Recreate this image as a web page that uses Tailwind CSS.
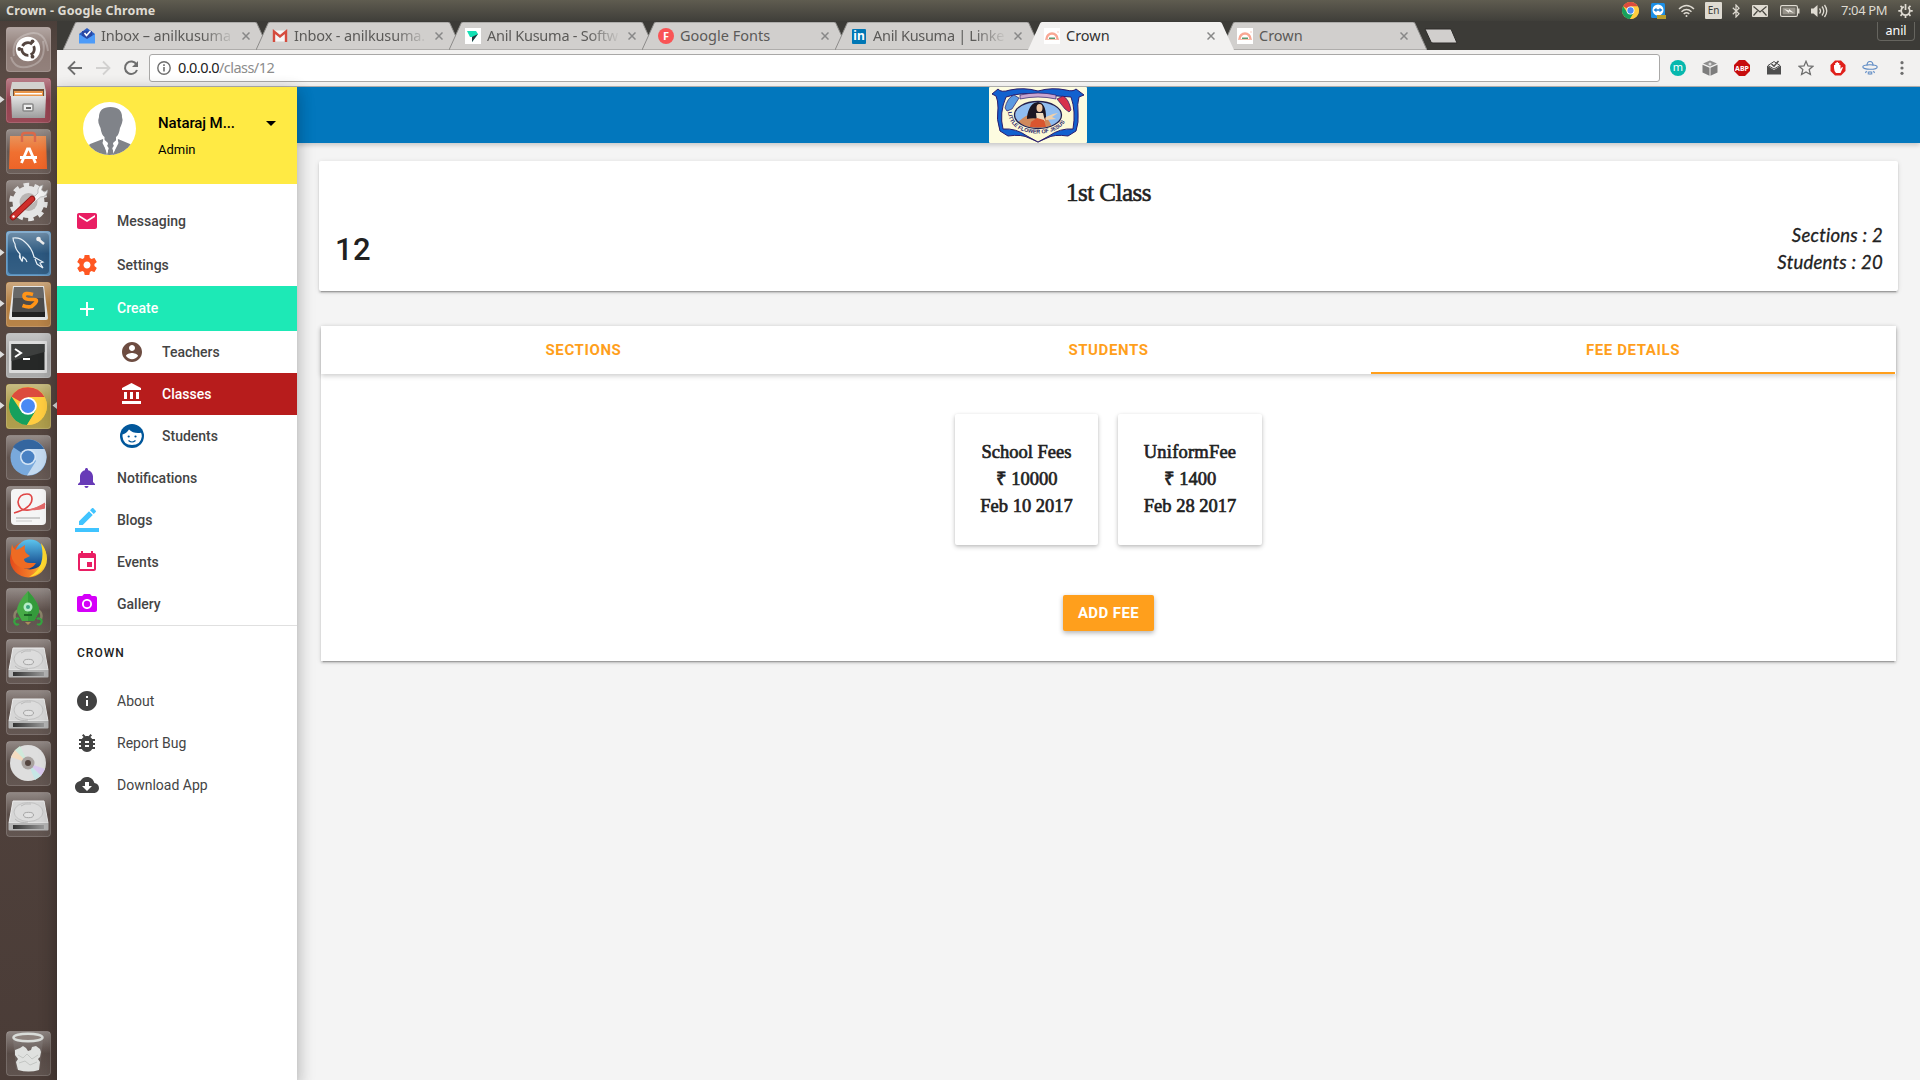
<!DOCTYPE html>
<html lang="en">
<head>
<meta charset="utf-8">
<title>Crown</title>
<script src="https://cdn.jsdelivr.net/npm/@tailwindcss/browser@4"></script>
</head>
<body class="w-[1920px] h-[1080px] overflow-hidden bg-[#f4f4f4] font-['Roboto',sans-serif] text-[#212121] flex flex-col">
<svg class="absolute w-0 h-0">
  <defs>
    <linearGradient id="gloss" x1="0" y1="0" x2="0" y2="1"><stop offset="0" stop-color="#fff" stop-opacity=".38"/><stop offset=".5" stop-color="#fff" stop-opacity=".08"/><stop offset="1" stop-color="#fff" stop-opacity=".12"/></linearGradient>
    <linearGradient id="metal" x1="0" y1="0" x2="0" y2="1"><stop offset="0" stop-color="#e4e4e4"/><stop offset="1" stop-color="#9d9d9d"/></linearGradient>
    <linearGradient id="bag" x1="0" y1="0" x2="0" y2="1"><stop offset="0" stop-color="#e8935a"/><stop offset=".5" stop-color="#f07030"/><stop offset="1" stop-color="#ee6428"/></linearGradient>
    <linearGradient id="fox" x1="0" y1="0" x2="1" y2="0"><stop offset="0" stop-color="#e3491b"/><stop offset=".6" stop-color="#f5832a"/><stop offset="1" stop-color="#ffe23a"/></linearGradient>
    <linearGradient id="globe" x1="0" y1="0" x2="0" y2="1"><stop offset="0" stop-color="#5cc4ee"/><stop offset="1" stop-color="#0d3a80"/></linearGradient>
    <linearGradient id="edge" x1="0" y1="0" x2="1" y2="0"><stop offset="0" stop-color="#333"/><stop offset="1" stop-color="#999"/></linearGradient>
  </defs>
  <symbol id="tile" viewBox="0 0 45 45"><rect x=".5" y=".5" width="44" height="44" rx="3" fill="url(#gloss)" stroke="#fff" stroke-opacity=".2"/></symbol>
  <symbol id="disk" viewBox="0 0 45 45"><path d="M7 9h31l4 22H3z" fill="#d6d6d6" stroke="#ececec"/><path d="M2.500 31h40v6.500q0 1-1 1h-38q-1 0-1-1z" fill="#b5b5b5"/><path d="M7 33h31v4H7z" fill="url(#edge)"/><ellipse cx="22.500" cy="20" rx="14.500" ry="9.500" fill="#dcdcdc" stroke="#c2c2c2"/><ellipse cx="22.500" cy="23" rx="5" ry="2.700" fill="#e2e2e2" stroke="#a5a5a5"/><path d="M9 27q5 5 13 3M15 14q3-3 10-2" fill="none" stroke="#b9b9b9"/></symbol>
  <symbol id="chrome" viewBox="0 0 38 38"><circle cx="19" cy="19" r="19" fill="#ffcd40"/><path d="M19 19L2.500 9.500A19 19 0 0 1 35.500 10H19z" fill="#dc4b3e"/><path d="M2.500 9.500A19 19 0 0 0 18 38l9-14-8-5-7.500 4z" fill="#16a05d"/><path d="M19 10h16.500A19 19 0 0 1 18 38l9-15z" fill="#ffcd40"/><circle cx="19" cy="19" r="8.800" fill="#fff"/><circle cx="19" cy="19" r="7" fill="#4a8af4"/></symbol>
  <symbol id="tab" viewBox="0 0 206 28"><path d="M0 28L12 1.500Q12.500 0 14 0H192Q193.500 0 194 1.500L206 28z"/></symbol>
  <symbol id="crownfav" viewBox="0 0 16 16"><rect width="16" height="16" fill="#fff"/><path d="M2.500 11a5.500 5.500 0 0 1 11 0" fill="none" stroke="#f9a794" stroke-width="2.400"/><path d="M5 9.500h6v2H5z" fill="#5c9a72"/><path d="M1 11.500h14" stroke="#f5bfae"/><circle cx="14" cy="4" r=".7" fill="#f9b9a9"/></symbol>
  <symbol id="close" viewBox="0 0 8 8"><path d="M.5 .5l7 7M7.500 .5l-7 7" stroke="#888" stroke-width="1.500"/></symbol>
</svg>

<!-- System panel -->
<div class="h-[21px] shrink-0 bg-linear-to-b from-[#5f5c50] to-[#403f3a] flex items-center justify-between pl-1.5 pr-[7px] text-[#dfdbd2] font-['Noto_Sans','Open_Sans',sans-serif]">
  <div class="text-[12.500px] font-bold tracking-[0.150px] whitespace-nowrap pt-px">Crown - Google Chrome</div>
  <div class="flex items-center h-full">
    <svg class="w-[17px] h-[17px] mr-[12px]"><use href="#chrome"/></svg>
    <svg class="w-[16px] h-[16px] mr-[11px]" viewBox="0 0 16 16"><rect width="14" height="15" rx="1.500" fill="#1b8fe6"/><circle cx="7" cy="7" r="5.500" fill="#fff"/><path d="M2.500 7l3-2.200v1.500h3V4.800l3 2.200-3 2.200V7.700h-3v1.500z" fill="#1b7fd6"/><path d="M6 12h9v4H6z" fill="#b99d2c"/></svg>
    <svg class="w-[17px] h-[14px] mr-[10px]" viewBox="0 0 17 14" fill="none" stroke="#dfdbd2" stroke-width="1.500"><path d="M1 5q7.500-7 15 0"/><path d="M3.500 7.700q5-4.500 10 0" /><path d="M5.700 10q2.800-2.500 5.600 0"/><circle cx="8.500" cy="12" r="1" fill="#dfdbd2" stroke="none"/></svg>
    <div class="w-[17px] h-[17px] mr-[10px] bg-[#dfdbd2] rounded-[1px] text-[#3c3b37] text-[10px] leading-[17px] text-center">En</div>
    <svg class="w-[8px] h-[14px] mr-[12px]" viewBox="0 0 8 14" fill="none" stroke="#dfdbd2" stroke-width="1.200"><path d="M.8 3.800l6.200 6L4 13V1l3 3.200-6.200 6"/></svg>
    <svg class="w-[16px] h-[12px] mr-[12px]" viewBox="0 0 16 12"><rect width="16" height="12" rx="1" fill="#dfdbd2"/><path d="M1.500 1.500L8 7l6.500-5.500M1.500 10.500L5.500 6M14.500 10.500l-4-4.500" fill="none" stroke="#4a4842" stroke-width="1.200"/></svg>
    <svg class="w-[20px] h-[12px] mr-[11px]" viewBox="0 0 20 12"><rect x=".6" y=".6" width="16.800" height="10.800" rx="1.500" fill="none" stroke="#dfdbd2" stroke-width="1.200"/><rect x="2.500" y="2.500" width="13" height="7" fill="#97938a"/><path d="M18 3.500h1.500v5H18z" fill="#dfdbd2"/><path d="M4 4l5 1.500V4l5 4-5-1.500V8z" fill="#f2efe8"/></svg>
    <svg class="w-[17px] h-[14px] mr-[13px]" viewBox="0 0 17 14"><path d="M0 4.500h2.500L6.500 1v12l-4-3.500H0z" fill="#dfdbd2"/><path d="M8.500 4.500q2 2.500 0 5M11 2.500q3.500 4.500 0 9M13.500 1q4.500 6 0 12" fill="none" stroke="#dfdbd2" stroke-width="1.300"/></svg>
    <div class="w-[46px] text-[13px] tracking-[-0.400px] whitespace-nowrap mr-[11px]">7:04 PM</div>
    <svg class="w-[15px] h-[15px]" viewBox="0 0 15 15" fill="none" stroke="#dfdbd2"><circle cx="7.500" cy="7.800" r="4.300" stroke-width="1.700" stroke-dasharray="22.500 4.500" stroke-dashoffset="-22.500"/><path d="M7.500 1v6M2.500 2.800l1.700 1.700M12.500 2.800l-1.700 1.700M.3 7.800h2.500M14.700 7.800h-2.500M2.500 12.800l1.700-1.700M12.500 12.800l-1.700-1.700M7.500 15v-2.500" stroke-width="1.700"/></svg>
  </div>
</div>

<div class="flex flex-1 min-h-0">
  <!-- Launcher -->
  <div class="w-[57px] shrink-0 bg-linear-to-b from-[#4b3f3a] via-[#5a4b45] via-5% to-[#4a3c37] flex flex-col gap-1.5 pt-1.5 pl-1.5 pb-1">
    <svg class="w-[45px] h-[45px] shrink-0" viewBox="0 0 45 45"><rect width="45" height="45" rx="3" fill="#84706a"/><use href="#tile"/><path d="M8 29Q5 12 22 7t20 17M37 14q4 20-12 25T5 30" fill="none" stroke="#fff" stroke-opacity=".25" stroke-width="2"/><circle cx="22" cy="22" r="12.200" fill="#fff"/><circle cx="22" cy="22" r="6.300" fill="none" stroke="#54453f" stroke-width="2.800" stroke-dasharray="11 2.200" stroke-dashoffset="4"/><circle cx="13.300" cy="22" r="1.900" fill="#54453f"/><circle cx="26.500" cy="14.300" r="1.900" fill="#54453f"/><circle cx="26.500" cy="29.700" r="1.900" fill="#54453f"/></svg>
    <svg class="w-[45px] h-[45px] shrink-0 overflow-visible" viewBox="0 0 45 45"><path d="M-6 18v7l4.500-3.500z" fill="#ddd"/><rect width="45" height="45" rx="3" fill="#8c3140"/><use href="#tile"/><path d="M6 4h32l2 10v4H4v-4z" fill="#d2d2ce"/><rect x="7" y="11" width="31" height="9" fill="#724f36"/><path d="M8 13h29v6H8z" fill="#e99548"/><path d="M9 15h27v1.500H9z" fill="#fff"/><path d="M5 18h35l-1 22H6z" fill="url(#metal)"/><rect x="17" y="26" width="10" height="7" rx="1" fill="#eee" stroke="#888" stroke-width="1.500"/><path d="M20 29h5v2h-5z" fill="#666"/></svg>
    <svg class="w-[45px] h-[45px] shrink-0" viewBox="0 0 45 45"><use href="#tile"/><path d="M4 7h36l1 33H3z" fill="url(#bag)"/><path d="M16 13V7q0-3 3-3h7q3 0 3 3v6" fill="none" stroke="#d9694a" stroke-width="2.400"/><path d="M15.500 34l6-14h2l6 14M14 28.500h17" fill="none" stroke="#fff" stroke-width="2.800"/></svg>
    <svg class="w-[45px] h-[45px] shrink-0" viewBox="0 0 45 45"><use href="#tile"/><circle cx="22.500" cy="22" r="12" fill="none" stroke="#e4e4e4" stroke-width="8"/><circle cx="22.500" cy="22" r="17" fill="none" stroke="#e4e4e4" stroke-width="4.500" stroke-dasharray="5.500 5.180"/><circle cx="22.500" cy="22" r="9" fill="#b9b5b3"/><path d="M24 21l8-8q-1-7 5-8l-1.500 5 3 2 3-2q0 7-7 7l-8 7z" fill="#f2f2f2" stroke="#aaa" stroke-width=".7"/><path d="M26 19L7 37" stroke="#8d1715" stroke-width="6.500" stroke-linecap="round"/><path d="M26 19L7 37" stroke="#cf2e2b" stroke-width="4.500" stroke-linecap="round"/><circle cx="7.500" cy="36.500" r="1.200" fill="#fff"/></svg>
    <svg class="w-[45px] h-[45px] shrink-0 overflow-visible" viewBox="0 0 45 45"><path d="M-6 18v7l4.500-3.500z" fill="#ddd"/><rect width="45" height="45" rx="3" fill="#3f7fb3"/><rect x="2" y="2" width="41" height="41" rx="4" fill="#1a4a74"/><use href="#tile"/><path d="M17 30q-5-3-3-7-5-5-5-10-2-3-2-6 7-1 12 4 7 6 9 15l9 5-3 1 3 5-6-4-2-5M14 23q0 5 2 7l1-4q3 2 4 5" fill="none" stroke="#e8f0f6" stroke-width="1.200"/><path d="M32 8l6 5" stroke="#eee" stroke-width="2.500"/><circle cx="32.500" cy="8" r="2.300" fill="#eee"/></svg>
    <svg class="w-[45px] h-[45px] shrink-0 overflow-visible" viewBox="0 0 45 45"><path d="M-6 18v7l4.500-3.500z" fill="#ddd"/><rect width="45" height="45" rx="3" fill="#ae7330"/><use href="#tile"/><path d="M7 4h31l4 32q0 2-2 2H5q-2 0-2-2z" fill="#e6e6e6"/><path d="M8 5h29l2 25H6z" fill="#4c4c4c"/><path d="M8 5h29l1 11H7z" fill="#686868"/><path d="M6 30h33v5H6z" fill="#222"/><path d="M27 12.500q-9-2.500-9 1.500t8.500 3.500-1 7q-4 1-9-1" fill="none" stroke="#ff9417" stroke-width="3.600"/></svg>
    <svg class="w-[45px] h-[45px] shrink-0 overflow-visible" viewBox="0 0 45 45"><path d="M-6 18v7l4.500-3.500z" fill="#ddd"/><rect width="45" height="45" rx="3" fill="#a0a0a0"/><use href="#tile"/><rect x="3" y="8" width="38" height="32" rx="1" fill="#dcdcdc"/><rect x="5.500" y="11" width="33" height="26" fill="#262827"/><path d="M5.500 11h33v8l-33 9z" fill="#3d3f3e"/><path d="M9 16l6 4-6 4M17 26h7" fill="none" stroke="#fff" stroke-width="2"/></svg>
    <svg class="w-[45px] h-[45px] shrink-0 overflow-visible" viewBox="0 0 45 45"><path d="M-6 18v7l4.500-3.500zM51 18v7l-4.500-3.500z" fill="#ddd"/><rect width="45" height="45" rx="3" fill="#a59236"/><use href="#tile"/><use href="#chrome" x="3" y="3" width="38" height="38"/></svg>
    <svg class="w-[45px] h-[45px] shrink-0" viewBox="0 0 45 45"><use href="#tile"/><circle cx="22.500" cy="22.500" r="18" fill="#79a9dc"/><path d="M22 22L7 12Q13 4 23 4.500T38 14H22z" fill="#34669f"/><path d="M22 14h16.500Q43 22 38 31T21 40.500L30 26z" fill="#c4daf0"/><circle cx="22" cy="22" r="8" fill="#d6e6f6"/><circle cx="22" cy="22" r="6.500" fill="#4981c3"/></svg>
    <svg class="w-[45px] h-[45px] shrink-0" viewBox="0 0 45 45"><use href="#tile"/><rect x="5" y="3" width="35" height="36" rx="4" fill="#f5f5f5"/><path d="M8 27Q26 22 26 13q0-5-5-5-8 0-9 8 1 9 11 8 8-1 16-6" fill="none" stroke="#e04545" stroke-width="1.600"/><path d="M21 23.500q9-1 18-7v6q-9 3-18 1z" fill="#e46a6a"/><path d="M10 31h24v2H10zM10 34.500h16v1H10z" fill="#ccc"/></svg>
    <svg class="w-[45px] h-[45px] shrink-0" viewBox="0 0 45 45"><use href="#tile"/><circle cx="22.500" cy="22" r="18.500" fill="url(#fox)"/><circle cx="24" cy="17.500" r="15" fill="url(#globe)"/><path d="M35 6q10 12 2 25-5 8-14 9 18-10 12-34z" fill="#ffd92f"/><path d="M6 7q1 5 4 6 4-1 9-5-1 5 1 8l4 3-6 3q0 4 6 4l6 0q-5 8-14 5-10-4-11-14 0-5 1-10z" fill="#ee6b23"/></svg>
    <svg class="w-[45px] h-[45px] shrink-0" viewBox="0 0 45 45"><use href="#tile"/><path d="M12 22q-5 3-3 9M32 22q5 3 3 9" fill="none" stroke="#8a8468" stroke-width="2.500"/><path d="M22 3q12 13 11 21l-5 9H16l-5-9Q10 16 22 3z" fill="#46aa46"/><path d="M22 3v30h6l5-9Q34 16 22 3z" fill="#349a3b"/><path d="M19 34h6l-3 3z" fill="#a8905a"/><circle cx="22" cy="19" r="4.500" fill="#b5ecc8"/><circle cx="22" cy="19" r="2" fill="#3aa37e"/><path d="M18 27h8" stroke="#1d6325" stroke-width="2"/><path d="M13 31a3 3 0 1 0 0 5M31 31a3 3 0 1 1 0 5" fill="none" stroke="#35a540" stroke-width="2"/></svg>
    <svg class="w-[45px] h-[45px] shrink-0" viewBox="0 0 45 45"><use href="#tile"/><use href="#disk"/></svg>
    <svg class="w-[45px] h-[45px] shrink-0" viewBox="0 0 45 45"><use href="#tile"/><use href="#disk"/></svg>
    <svg class="w-[45px] h-[45px] shrink-0" viewBox="0 0 45 45"><use href="#tile"/><circle cx="22" cy="22" r="18" fill="#dedede"/><path d="M22 22L5 16l4-7z" fill="#f4dcc0"/><path d="M22 22L9 9l5-4z" fill="#cfeadb"/><path d="M22 22l17 6-4 7z" fill="#d9c9ef"/><path d="M22 22l13 13-6 4z" fill="#c6e6e6"/><circle cx="22" cy="22" r="6.500" fill="#a9a3a0"/><circle cx="22" cy="22" r="3" fill="#54453f"/></svg>
    <svg class="w-[45px] h-[45px] shrink-0" viewBox="0 0 45 45"><use href="#tile"/><use href="#disk"/></svg>
    <svg class="w-[45px] h-[45px] shrink-0 mt-auto" viewBox="0 0 45 45"><use href="#tile"/><path d="M7 9l3 29q12 5 24 0l3-29z" fill="#999" fill-opacity=".2"/><path d="M9 19l5-2 3-2 3 2 2 3 3-1 1-3 4-1 4 3 1 3-1 5-2 2 2 3-1 8q-10 3-21 0l-2-8 2-3-3-4z" fill="#dfe1df"/><path d="M12 24l5 3 4-4 5 5 6-4M13 32l6-2 5 4 7-3" stroke="#c3c6c3" fill="none"/><ellipse cx="22" cy="6.500" rx="14.500" ry="3.800" fill="#8d827d" stroke="#d9dcd9" stroke-width="2.500"/></svg>
  </div>

  <div class="flex-1 min-w-0 flex flex-col">
    <!-- Tab strip -->
    <div class="h-[29px] shrink-0 bg-[#3c3b37] flex justify-between pl-1.5 font-['Noto_Sans','Open_Sans',sans-serif] text-[14.500px] text-[#5b5a58]">
      <div class="flex pt-px">
        <div class="relative w-[206px] h-7 flex items-center pl-4"><svg class="absolute inset-0 w-[206px] h-7 fill-[#d1cfcd] stroke-[#8c8b89]"><use href="#tab"/></svg>
          <svg class="relative w-4 h-4 mr-1.5" viewBox="0 0 16 16"><path d="M0 6l8-6 8 6v9H0z" fill="#2a5cc0"/><path d="M3 3h10v8H3z" fill="#2a49a5"/><path d="M5.500 5l2 2.500L11.500 3" stroke="#fff" stroke-width="1.700" fill="none"/><path d="M0 6l8 5 8-5v9.500H0z" fill="#4d9bf8"/></svg>
          <span class="relative w-[134px] overflow-hidden whitespace-nowrap tracking-[-0.150px] mask-r-from-75%">Inbox – anilkusuma</span><svg class="relative w-2 h-2 ml-[7px]"><use href="#close"/></svg></div>
        <div class="relative w-[206px] h-7 flex items-center pl-4 -ml-[13px]"><svg class="absolute inset-0 w-[206px] h-7 fill-[#d1cfcd] stroke-[#8c8b89]"><use href="#tab"/></svg>
          <svg class="relative w-4 h-4 mr-1.5" viewBox="0 0 16 16"><path d="M1 2.500h14v11H1z" fill="#f5f5f5"/><path d="M2 14V3.500l6 5 6-5V14" fill="none" stroke="#d54b3d" stroke-width="2.400"/></svg>
          <span class="relative w-[134px] overflow-hidden whitespace-nowrap tracking-[-0.150px] mask-r-from-75%">Inbox - anilkusuma.</span><svg class="relative w-2 h-2 ml-[7px]"><use href="#close"/></svg></div>
        <div class="relative w-[206px] h-7 flex items-center pl-4 -ml-[13px]"><svg class="absolute inset-0 w-[206px] h-7 fill-[#d1cfcd] stroke-[#8c8b89]"><use href="#tab"/></svg>
          <svg class="relative w-4 h-4 mr-1.5" viewBox="0 0 16 16"><rect width="16" height="16" fill="#fff"/><path d="M2 3h9l2 3-6 8V9H5z" fill="#12e0b4"/><path d="M7 9l6-3-6 8z" fill="#26343d"/></svg>
          <span class="relative w-[134px] overflow-hidden whitespace-nowrap tracking-[-0.250px] mask-r-from-75%">Anil Kusuma - Softw</span><svg class="relative w-2 h-2 ml-[7px]"><use href="#close"/></svg></div>
        <div class="relative w-[206px] h-7 flex items-center pl-4 -ml-[13px]"><svg class="absolute inset-0 w-[206px] h-7 fill-[#d1cfcd] stroke-[#8c8b89]"><use href="#tab"/></svg>
          <div class="relative w-4 h-4 mr-1.5 rounded-full bg-[#f95455] text-white text-[11px] leading-4 font-bold text-center">F</div>
          <span class="relative w-[134px] overflow-hidden whitespace-nowrap">Google Fonts</span><svg class="relative w-2 h-2 ml-[7px]"><use href="#close"/></svg></div>
        <div class="relative w-[206px] h-7 flex items-center pl-4 -ml-[13px]"><svg class="absolute inset-0 w-[206px] h-7 fill-[#d1cfcd] stroke-[#8c8b89]"><use href="#tab"/></svg>
          <div class="relative w-[14px] h-[15px] mr-[7px] ml-px rounded-[1px] bg-[#0077b5] text-white text-[12px] leading-[14px] font-bold text-center">in</div>
          <span class="relative w-[134px] overflow-hidden whitespace-nowrap tracking-[-0.300px] mask-r-from-75%">Anil Kusuma | Linke</span><svg class="relative w-2 h-2 ml-[7px]"><use href="#close"/></svg></div>
        <div class="relative z-10 w-[206px] h-7 flex items-center pl-4 -ml-[13px] text-[#333]"><svg class="absolute inset-0 w-[206px] h-7 fill-[#f2f1f0]"><use href="#tab"/></svg>
          <svg class="relative w-4 h-4 mr-1.5"><use href="#crownfav"/></svg>
          <span class="relative w-[134px]">Crown</span><svg class="relative w-2 h-2 ml-[7px]"><use href="#close"/></svg></div>
        <div class="relative w-[206px] h-7 flex items-center pl-4 -ml-[13px]"><svg class="absolute inset-0 w-[206px] h-7 fill-[#d1cfcd] stroke-[#8c8b89]"><use href="#tab"/></svg>
          <svg class="relative w-4 h-4 mr-1.5"><use href="#crownfav"/></svg>
          <span class="relative w-[134px]">Crown</span><svg class="relative w-2 h-2 ml-[7px]"><use href="#close"/></svg></div>
        <svg class="w-[34px] h-4 mt-[6px] -ml-[3px]" viewBox="0 0 34 16"><path d="M1 1h26l6 14H9q-1.500 0-2-1z" fill="#d1cfcd" stroke="#2e2d2a"/></svg>
      </div>
      <div class="w-[38px] h-[19px] mr-[5px] mt-px border border-t-0 border-[#66655f] rounded-b-[4px] text-white text-[12.500px] leading-[18px] text-center">anil</div>
    </div>
    <!-- Toolbar -->
    <div class="h-[37px] shrink-0 bg-[#f2f1f0] border-b border-[#b3b2b1] flex items-center pl-[10px] pr-[10px] font-['Noto_Sans','Open_Sans',sans-serif]">
      <svg class="w-4 h-4 mr-3" viewBox="0 0 16 16" fill="none" stroke="#6e6e6e" stroke-width="1.800"><path d="M15 8H2M8 1.500L1.500 8 8 14.500"/></svg>
      <svg class="w-4 h-4 mr-3" viewBox="0 0 16 16" fill="none" stroke="#d2d1d0" stroke-width="1.800"><path d="M1 8h13M8 1.500L14.500 8 8 14.500"/></svg>
      <svg class="w-4 h-4 mr-[10px]" viewBox="0 0 16 16"><path d="M13.500 4.500A6.200 6.200 0 1 0 14 10" fill="none" stroke="#6e6e6e" stroke-width="2"/><path d="M15 1v6H9z" fill="#6e6e6e"/></svg>
      <div class="w-[1511px] h-7 bg-white border border-[#a9a8a7] rounded-[3px] flex items-center pl-[7px] text-[14.500px] tracking-[-0.550px] text-[#8c8c8c]">
        <svg class="w-[14px] h-[14px] mr-[7px]" viewBox="0 0 14 14"><circle cx="7" cy="7" r="6.200" fill="none" stroke="#6e6e6e" stroke-width="1.400"/><path d="M6.200 6h1.600v4.500H6.200zM6.200 3.300h1.600v1.600H6.200z" fill="#6e6e6e"/></svg>
        <span><span class="text-[#222]">0.0.0.0</span>/class/12</span>
      </div>
      <div class="flex-1 flex items-center justify-between pl-[10px]">
        <div class="w-4 h-4 rounded-full bg-[#07b8ae] text-white text-[11px] leading-[14px] text-center">m</div>
        <svg class="w-4 h-4" viewBox="0 0 16 16"><path d="M8 .5l7 3-7 3-7-3z" fill="#8e8e8e"/><path d="M.5 4.800l7 3v8l-7-3.300zM15.500 4.800l-7 3v8l7-3.300z" fill="#7d7d7d"/><circle cx="8" cy="4" r="1.500" fill="#ddd"/></svg>
        <svg class="w-4 h-4" viewBox="0 0 16 16"><path d="M5 0h6l5 5v6l-5 5H5l-5-5V5z" fill="#c70d0d"/><text x="8" y="10.700" text-anchor="middle" font-size="7" font-weight="700" fill="#fff">ABP</text></svg>
        <svg class="w-4 h-4" viewBox="0 0 16 16"><path d="M1 5.500l7 4.500 7-4.500v9H1z" fill="#4e4e4e"/><path d="M2 5.500L8 1.500l6 4-6 3.500z" fill="#f2f1f0" stroke="#4e4e4e"/><path d="M5.500 4L8 6.200 12.500 1" fill="none" stroke="#4e4e4e" stroke-width="1.500"/></svg>
        <svg class="w-4 h-4" viewBox="0 0 16 16"><path d="M8 1.300l2 4.600 5 .4-3.800 3.300 1.200 4.900L8 11.900l-4.400 2.600 1.200-4.900L1 6.300l5-.4z" fill="none" stroke="#6e6e6e" stroke-width="1.300"/></svg>
        <svg class="w-4 h-4" viewBox="0 0 16 16"><path d="M5 .5h6L15.500 5v6L11 15.500H5L.5 11V5z" fill="#e0201b"/><path d="M4 8V5h1.200V3h1.300V2h1.400v1h1.400v2H10.500v4l1.500-2 1 .6L10.500 13H6q-2-2-2-5z" fill="#fff"/></svg>
        <svg class="w-4 h-4" viewBox="0 0 16 16" fill="none" stroke="#5d8ac4" stroke-width="1.100"><path d="M5 5.500q0-4 3-4t3 4"/><ellipse cx="8" cy="7" rx="7.200" ry="2.300"/><path d="M4.500 11L3.500 13M8 11v4M11.500 11l1 2M6.300 11.500v3M9.700 11.500v3"/></svg>
        <svg class="w-4 h-4" viewBox="0 0 16 16" fill="#6e6e6e"><circle cx="8" cy="2.700" r="1.600"/><circle cx="8" cy="8" r="1.600"/><circle cx="8" cy="13.300" r="1.600"/></svg>
      </div>
    </div>

    <!-- Page -->
    <div class="flex-1 min-h-0 flex bg-[#f4f4f4]">
      <aside class="w-[240px] shrink-0 bg-white relative z-10 shadow-[0_8px_17px_2px_rgba(0,0,0,0.140),0_3px_14px_2px_rgba(0,0,0,0.120),0_5px_5px_-3px_rgba(0,0,0,0.200)] text-[14px] font-medium text-[#444]">
        <div class="h-[97px] bg-[#ffea44] text-black flex pt-[15px] pl-[26px]">
          <svg class="w-[53px] h-[53px] mr-[22px]" viewBox="0 0 53 53"><defs><clipPath id="av"><circle cx="26.500" cy="26.500" r="26.500"/></clipPath></defs><g clip-path="url(#av)"><rect width="53" height="53" fill="#fff"/><path d="M16 15Q16 5 27.500 5T39 15q1 2 0 6-1 3-2 5-1 7-4 9v4l-5.500 5-6-5v-4q-3-2-4-9-1-2-2-5-.5-4 .5-6z" fill="#808389"/><path d="M20 37L7 42q-3 2-3 11h20zM35 37l12 5q4 2 4 11H30z" fill="#808389"/><path d="M25 41h5l1 3-1.500 2L31 53h-7l1.500-7-1.500-2z" fill="#808389"/><path d="M20.500 37l-1 4 5 10 1-5-1.500-2 1-3zM34.500 37l1 4-5 10-1-5 1.500-2-1-3z" fill="#fff"/></g></svg>
          <div class="flex-1 pt-[11px]">
            <div class="flex items-center h-5"><span class="text-[15px] tracking-[-0.100px] w-[107px]">Nataraj M...</span><svg class="w-[10px] h-[5px] ml-px" viewBox="0 0 10 5"><path d="M0 0h10L5 5z"/></svg></div>
            <div class="text-[13px] font-normal leading-5 mt-[7px]">Admin</div>
          </div>
        </div>
        <div class="pt-[15px] border-b border-[#e0e0e0]">
          <a class="h-11 flex items-center pl-[18px] gap-[18px]"><svg class="w-6 h-6 fill-[#e91e63]" viewBox="0 0 24 24"><path d="M20 4H4c-1.100 0-1.990.9-1.990 2L2 18c0 1.100.9 2 2 2h16c1.100 0 2-.9 2-2V6c0-1.100-.9-2-2-2zm0 4l-8 5-8-5V6l8 5 8-5v2z"/></svg>Messaging</a>
          <a class="h-[43px] pt-px flex items-center pl-[18px] gap-[18px]"><svg class="w-6 h-6 fill-[#ff5722]" viewBox="0 0 24 24"><path d="M19.430 12.980c.04-.32.070-.64.070-.98s-.03-.66-.07-.98l2.110-1.650c.19-.15.240-.42.120-.64l-2-3.460c-.12-.22-.39-.3-.61-.22l-2.490 1c-.52-.4-1.080-.73-1.690-.98l-.38-2.650C14.460 2.180 14.250 2 14 2h-4c-.25 0-.46.180-.49.420l-.38 2.650c-.61.250-1.170.590-1.690.98l-2.490-1c-.23-.09-.49 0-.61.220l-2 3.460c-.13.220-.07.490.120.640l2.110 1.650c-.04.320-.07.650-.07.980s.03.660.070.980l-2.110 1.650c-.19.150-.24.420-.12.640l2 3.460c.12.220.390.300.610.220l2.490-1c.52.400 1.080.730 1.690.980l.38 2.650c.03.240.240.420.490.420h4c.25 0 .460-.18.490-.42l.38-2.650c.61-.25 1.170-.59 1.690-.98l2.490 1c.23.090.490 0 .610-.22l2-3.460c.12-.22.070-.49-.12-.64l-2.110-1.650zM12 15.500c-1.930 0-3.500-1.570-3.500-3.500s1.570-3.500 3.500-3.500 3.500 1.570 3.500 3.500-1.570 3.500-3.500 3.500z"/></svg>Settings</a>
          <a class="h-[45px] flex items-center pl-[18px] gap-[18px] bg-[#1de9b6] text-white"><svg class="w-6 h-6 fill-white" viewBox="0 0 24 24"><path d="M19 13h-6v6h-2v-6H5v-2h6V5h2v6h6v2z"/></svg>Create</a>
          <a class="h-[42px] flex items-center pl-[63px] gap-[18px]"><svg class="w-6 h-6 fill-[#6d4c41]" viewBox="0 0 24 24"><path d="M12 2C6.480 2 2 6.480 2 12s4.480 10 10 10 10-4.480 10-10S17.520 2 12 2zm0 3c1.660 0 3 1.340 3 3s-1.340 3-3 3-3-1.340-3-3 1.340-3 3-3zm0 14.200c-2.500 0-4.710-1.280-6-3.220.03-1.990 4-3.080 6-3.080 1.990 0 5.970 1.090 6 3.080-1.290 1.940-3.500 3.220-6 3.220z"/></svg>Teachers</a>
          <a class="h-[42px] flex items-center pl-[63px] gap-[18px] bg-[#b71c1c] text-white"><svg class="w-6 h-6 fill-white" viewBox="0 0 24 24"><path d="M4 10v7h3v-7H4zm6 0v7h3v-7h-3zM2 22h19v-3H2v3zm14-12v7h3v-7h-3zm-4.500-9L2 6v2h19V6l-9.500-5z"/></svg>Classes</a>
          <a class="h-[42px] flex items-center pl-[63px] gap-[18px]"><svg class="w-6 h-6" viewBox="0 0 24 24"><circle cx="12" cy="12" r="12" fill="#01579b"/><path d="M2.500 10.500q4-1 6.500-5Q13.500 10 21 8.800q.8 1.200.8 3.700-1 8.500-9.800 8.500T2.500 12.500z" fill="#fff"/><circle cx="8.700" cy="12.500" r="1.100" fill="#01579b"/><circle cx="15.500" cy="12.500" r="1.100" fill="#01579b"/><path d="M8.500 16.500q3.500 3 7 0" fill="none" stroke="#01579b" stroke-width="1.200"/></svg>Students</a>
          <a class="h-[42px] flex items-center pl-[18px] gap-[18px]"><svg class="w-6 h-6 fill-[#673ab7]" viewBox="0 0 24 24"><path d="M11.500 22c1.100 0 2-.9 2-2h-4c0 1.100.9 2 2 2zm6.500-6v-5.500c0-3.070-2.130-5.640-5-6.320V3.500c0-.83-.67-1.500-1.500-1.500S10 2.670 10 3.500v.68c-2.870.68-5 3.250-5 6.320V16l-2 2v1h17v-1l-2-2z"/></svg>Notifications</a>
          <a class="h-[42px] flex items-center pl-[18px] gap-[18px]"><svg class="w-6 h-6 fill-[#40c4ff]" viewBox="0 0 24 24"><path d="M17.750 7L14 3.250l-10 10V17h3.750l10-10zm2.960-2.960c.39-.39.390-1.020 0-1.410L18.370.290c-.39-.39-1.020-.39-1.410 0L15 2.250 18.750 6l1.960-1.960zM0 20h24v4H0z"/></svg>Blogs</a>
          <a class="h-[42px] flex items-center pl-[18px] gap-[18px]"><svg class="w-6 h-6 fill-[#e91e63]" viewBox="0 0 24 24"><path d="M17 12h-5v5h5v-5zM16 1v2H8V1H6v2H5c-1.110 0-1.990.9-1.990 2L3 19c0 1.100.890 2 2 2h14c1.100 0 2-.9 2-2V5c0-1.100-.9-2-2-2h-1V1h-2zm3 18H5V8h14v11z"/></svg>Events</a>
          <a class="h-[42px] flex items-center pl-[18px] gap-[18px]"><svg class="w-6 h-6 fill-[#d500f9]" viewBox="0 0 24 24"><circle cx="12" cy="12" r="3.200"/><path d="M9 2L7.170 4H4c-1.100 0-2 .9-2 2v12c0 1.100.9 2 2 2h16c1.100 0 2-.9 2-2V6c0-1.100-.9-2-2-2h-3.170L15 2H9zm3 15c-2.760 0-5-2.240-5-5s2.240-5 5-5 5 2.240 5 5-2.240 5-5 5z"/></svg>Gallery</a>
        </div>
        <div class="h-[54px] flex items-center pl-5 text-[12px] tracking-[1px] text-[#212121]">CROWN</div>
        <div class="font-normal">
          <a class="h-[42px] flex items-center pl-[18px] gap-[18px]"><svg class="w-6 h-6 fill-[#424242]" viewBox="0 0 24 24"><path d="M12 2C6.480 2 2 6.480 2 12s4.480 10 10 10 10-4.480 10-10S17.520 2 12 2zm1 15h-2v-6h2v6zm0-8h-2V7h2v2z"/></svg>About</a>
          <a class="h-[42px] flex items-center pl-[18px] gap-[18px]"><svg class="w-6 h-6 fill-[#424242]" viewBox="0 0 24 24"><path d="M20 8h-2.810c-.45-.78-1.070-1.450-1.820-1.960L17 4.410 15.590 3l-2.170 2.170C12.960 5.060 12.490 5 12 5c-.49 0-.96.060-1.410.170L8.410 3 7 4.410l1.620 1.630C7.880 6.550 7.260 7.220 6.810 8H4v2h2.090c-.05.330-.09.660-.09 1v1H4v2h2v1c0 .34.040.670.090 1H4v2h2.810c1.040 1.790 2.970 3 5.190 3s4.150-1.210 5.190-3H20v-2h-2.090c.05-.33.090-.66.090-1v-1h2v-2h-2v-1c0-.34-.04-.67-.09-1H20V8zm-6 8h-4v-2h4v2zm0-4h-4v-2h4v2z"/></svg>Report Bug</a>
          <a class="h-[42px] flex items-center pl-[18px] gap-[18px]"><svg class="w-6 h-6 fill-[#424242]" viewBox="0 0 24 24"><path d="M19.350 10.040C18.670 6.590 15.640 4 12 4 9.110 4 6.600 5.640 5.350 8.040 2.340 8.360 0 10.910 0 14c0 3.310 2.690 6 6 6h13c2.760 0 5-2.240 5-5 0-2.640-2.050-4.780-4.650-4.960zM17 13l-5 5-5-5h3V9h4v4h3z"/></svg>Download App</a>
        </div>
      </aside>

      <main class="flex-1 min-w-0">
        <header class="h-14 bg-[#0277bd] flex justify-center shadow-[0_2px_5px_0_rgba(0,0,0,0.200)]">
          <svg class="w-[98px] h-14 -ml-[141px]" viewBox="0 0 98 56"><defs><clipPath id="oval"><ellipse cx="49" cy="28" rx="23" ry="13"/></clipPath></defs><rect width="98" height="56" rx="1" fill="#fdfce0"/><path d="M3 7l6-5q3 4 12 1 14-3 28 1 14-4 28-1 7 2 10-1l8 6-5 2q-2 8-1 14 1 12-2 20l-8 5q-14-2-21 2l-9 4-9-4q-7-4-21-2l-8-5q-4-12-2-23 0-8-2-12z" fill="#1261cf" stroke="#2a1c6c"/><path d="M17 10Q33 5 49 7t33 3q5 14 2 32-13-1-24 7l-11 6-11-6q-11-8-24-7-4-16 3-32z" fill="#fdf9d6" stroke="#2a1c6c"/><path d="M16 21q2-10 9-13l5 3-7 11-5 2z" fill="#5b9ae0" stroke="#2a1c6c" stroke-width=".7"/><path d="M82 23q-2-11-8-14l-6 3 8 10 4 3z" fill="#d7324c" stroke="#2a1c6c" stroke-width=".7"/><path d="M31 8q18-4 36 0v4q-18-4-36 0z" fill="#c9a6d0" stroke="#2a1c6c" stroke-width=".7"/><g clip-path="url(#oval)"><rect x="24" y="14" width="50" height="28" fill="#90bdf0"/><path d="M26 38q7-7 13-10l17 2q5 3 7 11H27z" fill="#d08a5c"/><path d="M38 30q2-14 11-15 8 1 8 15l-3 3q-8-3-16-1z" fill="#1d1722"/><ellipse cx="50.500" cy="21" rx="3" ry="4" fill="#f1c9a5"/><path d="M47 26h7l2 8h-8z" fill="#f0dcc0"/><path d="M57 30l7-3 5-1-6 4 4 2-10 1z" fill="#efd0aa"/><path d="M42 35l6-4 7 2 2 7H41z" fill="#d9552f"/></g><ellipse cx="49" cy="28" rx="23.500" ry="13.500" fill="none" stroke="#23204f" stroke-width="1.300"/><path id="motto" d="M19 25Q20 39 34 44 49 49 64 44 78 39 81 22" fill="none"/><text font-family="Liberation Sans" font-size="5.400" font-weight="700" fill="#2a1c6c"><textPath href="#motto">LITTLE FLOWER OF JESUS</textPath></text></svg>
        </header>

        <section class="mx-[22px] mt-[18px] h-[130px] bg-white rounded-[2px] shadow-[0_2px_2px_0_rgba(0,0,0,0.140),0_1px_5px_0_rgba(0,0,0,0.120),0_3px_1px_-2px_rgba(0,0,0,0.200)] pt-4 px-4">
          <h1 class="text-center font-['Liberation_Serif',serif] text-[25px] tracking-[-0.500px] leading-8 [-webkit-text-stroke:0.600px_#212121]">1st Class</h1>
          <div class="flex justify-between">
            <div class="text-[31px] font-medium leading-9 mt-[23px] tracking-[0.500px]">12</div>
            <div class="text-right font-['Lato',sans-serif] italic text-[18.500px] leading-[27px] mt-[13px] -mr-px tracking-[0.250px] [-webkit-text-stroke:0.300px_#212121]"><div>Sections : 2</div><div>Students : 20</div></div>
          </div>
        </section>

        <section class="mx-6 mt-[35px] h-[335px] bg-white shadow-[0_2px_2px_0_rgba(0,0,0,0.140),0_1px_5px_0_rgba(0,0,0,0.120),0_3px_1px_-2px_rgba(0,0,0,0.200)] flex flex-col items-center">
          <nav class="w-full h-12 shrink-0 grid grid-cols-3 text-[15px] font-bold tracking-[0.600px] text-[#ff9f1c] text-center leading-[48px] shadow-[0_2px_5px_0_rgba(0,0,0,0.200)]">
            <a>SECTIONS</a><a>STUDENTS</a><a class="border-b-2 border-[#ff9f1c] mr-px h-12">FEE DETAILS</a>
          </nav>
          <div class="mt-10 flex gap-5 font-['Liberation_Serif',serif] text-[18.500px] leading-[27px] text-center [-webkit-text-stroke:0.650px_#212121]">
            <div class="w-[143px] h-[131px] pt-[25px] rounded-[2px] shadow-[0_2px_5px_0_rgba(0,0,0,0.200),0_1px_3px_0_rgba(0,0,0,0.100)]"><div>School Fees</div><div>₹ 10000</div><div>Feb 10 2017</div></div>
            <div class="w-[144px] h-[131px] pt-[25px] rounded-[2px] shadow-[0_2px_5px_0_rgba(0,0,0,0.200),0_1px_3px_0_rgba(0,0,0,0.100)]"><div class="tracking-[0.200px]">UniformFee</div><div>₹ 1400</div><div>Feb 28 2017</div></div>
          </div>
          <button class="mt-[50px] w-[91px] h-9 bg-[#ff9f1c] text-white text-[15px] font-bold tracking-[0.400px] rounded-[2px] shadow-[0_2px_5px_0_rgba(0,0,0,0.300)]">ADD FEE</button>
        </section>
      </main>
    </div>
  </div>
</div>
</body>
</html>
